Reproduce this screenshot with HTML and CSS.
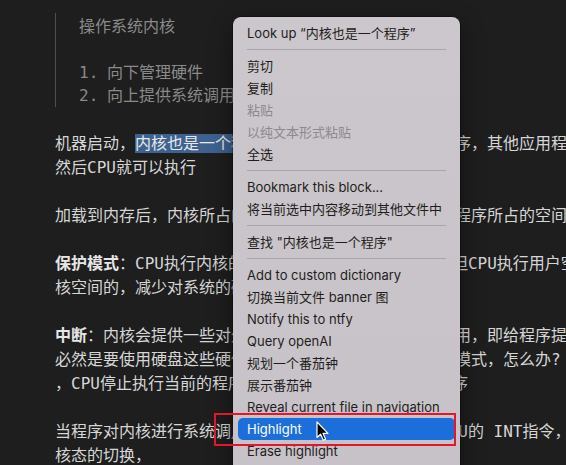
FILE: index.html
```html
<!DOCTYPE html>
<html lang="zh-CN">
<head>
<meta charset="utf-8">
<title>Context menu</title>
<link rel="stylesheet" href="styles.css">
</head>
<body>
<main class="doc">
  <blockquote class="quote">
    <p class="quote-title">操作系统内核</p>
    <ol class="quote-list">
      <li><span class="num">1.</span>向下管理硬件</li>
      <li><span class="num">2.</span>向上提供系统调用，让应用程序使用硬件资源</li>
    </ol>
  </blockquote>
  <p class="para">机器启动，<span class="sel">内核也是一个程序</span>，它首先被加载到内存的程序，其他应用程序也是如此<br>然后CPU就可以执行</p>
  <p class="para">加载到内存后，内核所占的内存空间称为内核空间，应用程序所占的空间称为用户空间</p>
  <p class="para"><b>保护模式</b>：CPU执行内核的代码时可访问全部内存空间，但CPU执行用户空间代码时不能访问内<br>核空间的，减少对系统的破坏。</p>
  <p class="para"><b>中断</b>：内核会提供一些对外的系统接口，以供应用程序调用，即给程序提供服务<br>必然是要使用硬盘这些硬件设备，但此时的程序处于用户模式，怎么办?<br>，CPU停止执行当前的程序，转而去执行内核中断处理程序</p>
  <p class="para">当程序对内核进行系统调用时，实际上就是执行了一条CPU的 INT指令，<br>核态的切换，</p>
</main>

<nav class="menu">
  <div class="item">Look up “内核也是一个程序”</div>
  <div class="sep"></div>
  <div class="item">剪切</div>
  <div class="item">复制</div>
  <div class="item disabled">粘贴</div>
  <div class="item disabled">以纯文本形式粘贴</div>
  <div class="item">全选</div>
  <div class="sep"></div>
  <div class="item">Bookmark this block...</div>
  <div class="item">将当前选中内容移动到其他文件中</div>
  <div class="sep"></div>
  <div class="item">查找 "内核也是一个程序"</div>
  <div class="sep"></div>
  <div class="item">Add to custom dictionary</div>
  <div class="item">切换当前文件 banner 图</div>
  <div class="item">Notify this to ntfy</div>
  <div class="item">Query openAI</div>
  <div class="item">规划一个番茄钟</div>
  <div class="item">展示番茄钟</div>
  <div class="item">Reveal current file in navigation</div>
  <div class="item active">Highlight</div>
  <div class="item">Erase highlight</div>
</nav>

<div class="mark"></div>

<svg class="cursor" width="14" height="21" viewBox="0 0 14 21" aria-hidden="true">
  <path d="M1 1 L1 16.5 L4.6 13.2 L7.3 19.2 L9.6 18.2 L7 12.3 L12 12.3 Z" fill="#000" stroke="#fff" stroke-width="1.2" stroke-linejoin="round"/>
</svg>
</body>
</html>
```

FILE: styles.css
```css
html, body {
  margin: 0;
  padding: 0;
}

body {
  width: 566px;
  height: 465px;
  overflow: hidden;
  background: #1e1e1e;
  position: relative;
  font-family: "DejaVu Sans Mono", "Noto Sans CJK SC", monospace;
  font-size: 16px;
  color: #d6d6d6;
}

.doc {
  padding: 13px 0 0 55px;
  white-space: nowrap;
}

.quote {
  margin: 0;
  padding: 2px 0 0 23px;
  border-left: 1px solid #4e4e4e;
  color: #8a8a8a;
}

.quote-title {
  margin: 0;
  line-height: 24px;
}

.quote-list {
  list-style: none;
  margin: 22px 0 0;
  padding: 0;
  line-height: 23px;
}

.quote-list li {
  display: flex;
}

.num {
  width: 28px;
  flex: none;
}

.para {
  margin: 24px 0 0;
  line-height: 24px;
}

.quote + .para {
  margin-top: 25px;
}

.para b {
  font-weight: 700;
  color: #e6e6e6;
}

.sel {
  background: #3e6290;
  color: #e8e8e8;
}

.menu {
  position: absolute;
  left: 233px;
  top: 17px;
  width: 227px;
  height: 470px;
  box-sizing: border-box;
  padding-top: 5px;
  background: linear-gradient(180deg, #cbc7cc 0%, #c6c2c7 100%);
  border-radius: 8px;
  box-shadow: 0 0 0 0.5px rgba(0, 0, 0, 0.6), 0 8px 24px rgba(0, 0, 0, 0.45);
  font-family: "Inter", "Noto Sans CJK SC", sans-serif;
  font-size: 13px;
  color: #1f1d20;
  white-space: nowrap;
}

.item {
  height: 22px;
  line-height: 22px;
  margin: 0 5px;
  padding-left: 9px;
  border-radius: 5px;
}

.item.disabled {
  color: #8d898e;
}

.item.active {
  background: #1c6fda;
  color: #ffffff;
}

.sep {
  height: 1px;
  margin: 5px 14px;
  background: #a9a5aa;
}

.mark {
  position: absolute;
  left: 214px;
  top: 413px;
  width: 242px;
  height: 33px;
  box-sizing: border-box;
  border: 2px solid #e3162c;
}

.cursor {
  position: absolute;
  left: 316px;
  top: 421px;
}
```
